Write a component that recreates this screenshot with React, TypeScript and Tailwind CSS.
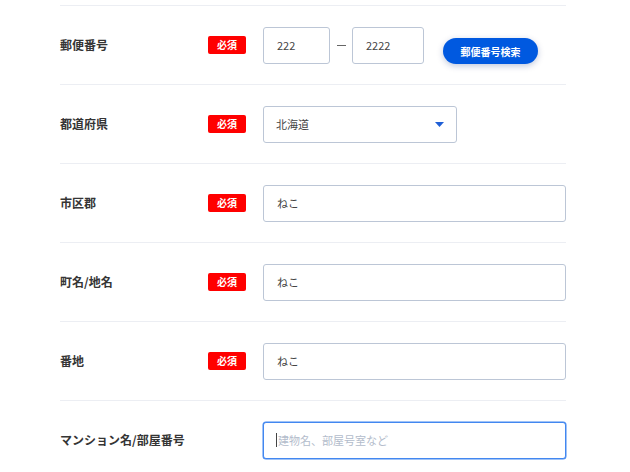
import React from "react";

const font = { fontFamily: '"Noto Sans CJK JP", "Noto Sans", sans-serif' };

function Badge() {
  return (
    <span className="flex h-[18px] w-[38px] items-center justify-center rounded-[2px] bg-[#ff0000] text-[10px] font-bold leading-none text-white">
      必須
    </span>
  );
}

function Row({
  label,
  required = true,
  children,
}: {
  label: string;
  required?: boolean;
  children: React.ReactNode;
}) {
  return (
    <div className="flex h-[79px] items-center border-t border-[#eceef3]">
      <div className="w-[148px] text-[12px] font-bold text-[#353535]">{label}</div>
      <div className="w-[55px]">{required && <Badge />}</div>
      <div className="flex flex-1 items-center">{children}</div>
    </div>
  );
}

function TextBox({ value, className = "" }: { value: string; className?: string }) {
  return (
    <div
      className={`flex h-[37px] items-center rounded-[3px] border border-[#bcc6d6] bg-white pl-[13px] text-[11px] text-[#444] ${className}`}
    >
      {value}
    </div>
  );
}

export default function App() {
  return (
    <div className="min-h-[472px] bg-white pt-[5px]" style={font}>
      <div className="ml-[60px] w-[506px]">
        <Row label="郵便番号">
          <TextBox value="222" className="w-[67px]" />
          <span className="ml-[7px] mr-[6px] h-px w-[9px] bg-[#666]" />
          <TextBox value="2222" className="w-[72px]" />
          <button className="ml-[19px] mt-[12px] h-[26px] w-[95px] rounded-full bg-[#0059e0] text-[10px] font-bold text-white shadow-[0_2px_6px_rgba(0,40,120,0.25)]">
            郵便番号検索
          </button>
        </Row>
        <Row label="都道府県">
          <div className="flex h-[37px] w-[194px] items-center justify-between rounded-[3px] border border-[#bcc6d6] bg-white pl-[12px] pr-[12px] text-[11px] text-[#444]">
            <span>北海道</span>
            <svg width="9" height="5" viewBox="0 0 9 5">
              <path d="M0 0 H9 L4.5 5 Z" fill="#1f5fd6" />
            </svg>
          </div>
        </Row>
        <Row label="市区郡">
          <TextBox value="ねこ" className="w-[303px]" />
        </Row>
        <Row label="町名/地名">
          <TextBox value="ねこ" className="w-[303px]" />
        </Row>
        <Row label="番地">
          <TextBox value="ねこ" className="w-[303px]" />
        </Row>
        <Row label="マンション名/部屋番号" required={false}>
          <div className="flex h-[37px] w-[303px] items-center rounded-[3px] border border-[#4287f0] bg-white pl-[12px] text-[11px] text-[#b3bccb] shadow-[0_0_0_0.5px_#4287f0]">
            <span className="mr-[1px] h-[14px] w-px bg-[#444]" />
            <span>建物名、部屋号室など</span>
          </div>
        </Row>
      </div>
    </div>
  );
}
